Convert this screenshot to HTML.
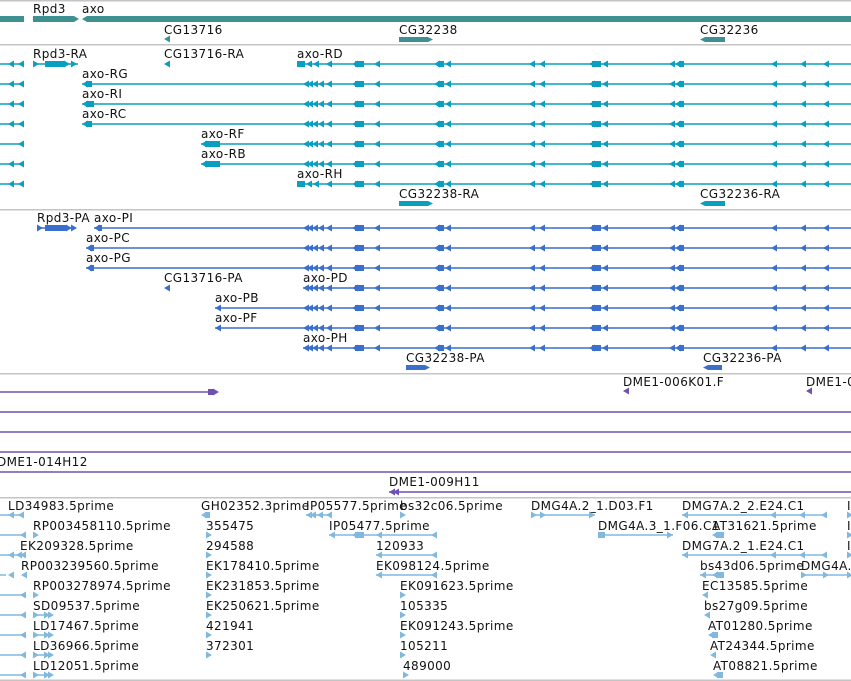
<!DOCTYPE html>
<html><head><meta charset="utf-8"><style>
html,body{margin:0;padding:0;background:#fff;overflow:hidden}
svg{display:block}
text{font-family:"DejaVu Sans","Liberation Sans",sans-serif;font-size:12px;letter-spacing:0.4px;fill:#111}
</style></head><body>
<svg id="s" xmlns="http://www.w3.org/2000/svg" width="851" height="681" viewBox="0 0 851 681"></svg>
<script>
const s=document.getElementById('s');let h='';
function ln(x1,x2,y,c){h+=`<rect x="${x1}" y="${y-0.75}" width="${x2-x1}" height="1.5" fill="${c}"/>`;}
function hr(y){h+=`<rect x="0" y="${y}" width="851" height="1.5" fill="#c4c4c4"/>`;}
function L(x,y,c){h+=`<polygon points="${x},${y} ${x+6},${y-3.5} ${x+6},${y+3.5}" fill="${c}"/>`;}
function R(x,y,c){h+=`<polygon points="${x+6},${y} ${x},${y-3.5} ${x},${y+3.5}" fill="${c}"/>`;}
function B(x1,x2,y,c){h+=`<rect x="${x1}" y="${y-3}" width="${x2-x1}" height="6" fill="${c}"/>`;}
function T(x,y,t){h+=`<text x="${x}" y="${y}">${t}</text>`;}
hr(0);
const tc='#3f9090';
T(33,13,'Rpd3');T(82,13,'axo');
h+=`<rect x="0" y="16" width="24" height="6" fill="${tc}"/>`;
h+=`<polygon points="33,16 74,16 79,19 74,22 33,22" fill="${tc}"/>`;
h+=`<polygon points="82,19 87,16 851,16 851,22 87,22" fill="${tc}"/>`;
T(164,34,'CG13716');L(164,39,tc);
T(399,34,'CG32238');h+=`<polygon points="399,37 428,37 433,39.5 428,42 399,42" fill="${tc}"/>`;
T(700,34,'CG32236');h+=`<polygon points="700,39.5 705,37 725,37 725,42 705,42" fill="${tc}"/>`;
hr(44);
function exons(y,c,full){
 if(full){B(297,305,y,c);L(306,y,c);L(313,y,c);}else{L(303,y,c);L(307,y,c);L(312,y,c);L(318,y,c);}
 L(326,y,c);B(355,364,y,c);L(352,y,c);L(374,y,c);
 L(434,y,c);B(438,444,y,c);L(445,y,c);
 L(529,y,c);L(539,y,c);
 L(589,y,c);B(592,601,y,c);L(602,y,c);
 L(669,y,c);L(675,y,c);B(679,684,y,c);
 L(771,y,c);L(800,y,c);L(823,y,c);
}
const rc='#0a9fc0';
const tr=[['axo-RD',297,64,297,0,1],['axo-RG',82,84,82,10,0],['axo-RI',82,104,82,12,0],['axo-RC',82,124,82,10,0],['axo-RF',201,144,201,19,0],['axo-RB',201,164,201,19,0],['axo-RH',297,184,297,0,1]];
tr.forEach((r,i)=>{const[lab,lx,y,st,bl,full]=r;T(lx,y-6,lab);ln(st,851,y,rc);if(bl){L(st,y,rc);B(st+4,st+bl,y,rc);}exons(y,rc,full);
 ln(0,24,y,rc);if(i!=4)L(8,y,rc);L(18,y,rc);});
T(33,58,'Rpd3-RA');R(33,64,rc);ln(33,78,64,rc);B(45,64,64,rc);R(64,64,rc);R(71,64,rc);
T(164,58,'CG13716-RA');L(164,64,rc);
T(399,198,'CG32238-RA');h+=`<polygon points="399,201 428,201 433,203.5 428,206 399,206" fill="${rc}"/>`;
T(700,198,'CG32236-RA');h+=`<polygon points="700,203.5 705,201 725,201 725,206 705,206" fill="${rc}"/>`;
hr(209);
const pc='#3a6fcc';
const pr=[['axo-PI',94,228,94],['axo-PC',86,248,86],['axo-PG',86,268,86],['axo-PD',303,288,303],['axo-PB',215,308,215],['axo-PF',215,328,215],['axo-PH',303,348,303]];
pr.forEach(r=>{const[lab,lx,y,st]=r;T(lx,y-6,lab);ln(st,851,y,pc);L(st,y,pc);if(st<100)B(st+4,st+8,y,pc);exons(y,pc,0);});
T(37,222,'Rpd3-PA');R(37,228,pc);ln(37,76,228,pc);B(45,66,228,pc);R(66,228,pc);R(71,228,pc);
T(164,282,'CG13716-PA');L(164,288,pc);
T(406,362,'CG32238-PA');h+=`<polygon points="406,365 425,365 430,367.5 425,370 406,370" fill="${pc}"/>`;
T(703,362,'CG32236-PA');h+=`<polygon points="703,367.5 708,365 722,365 722,370 708,370" fill="${pc}"/>`;
hr(373);
const vc='#7050b0';
ln(0,215,392,vc);B(208,214,392,vc);R(213,392,vc);
T(623,386,'DME1-006K01.F');L(623,391,vc);
T(806,386,'DME1-0');L(806,391,vc);
[412,432,452,472].forEach(y=>ln(0,851,y,vc));
T(-3,466,'DME1-014H12');
T(389,486,'DME1-009H11');ln(389,851,492,vc);L(389,492,vc);L(393,492,vc);
hr(497);
const ec='#80b8e0';const Y=n=>515+20*n;
T(8,510,'LD34983.5prime');ln(0,24,Y(0),ec);L(8,Y(0),ec);L(18,Y(0),ec);
const leftR=[['RP003458110.5prime',33],['EK209328.5prime',20],['RP003239560.5prime',21],['RP003278974.5prime',33],['SD09537.5prime',33],['LD17467.5prime',33],['LD36966.5prime',33],['LD12051.5prime',33]];
leftR.forEach((r,i)=>{const n=i+1,y=Y(n);T(r[1],y-5,r[0]);
 if(n==3){ln(0,6,y,ec);L(8,y,ec);L(21,y,ec);}
 else{ln(0,24,y,ec);L(20,y,ec);}
 if(n==2){L(8,y,ec);L(16,y,ec);}
 if(n==1||n==4)R(33,y,ec);
 if(n>=5){ln(33,52,y,ec);R(33,y,ec);R(44,y,ec);R(48,y,ec);}
});
T(201,510,'GH02352.3prime');L(201,Y(0),ec);B(205,210,Y(0),ec);
['355475','294588','EK178410.5prime','EK231853.5prime','EK250621.5prime','421941','372301'].forEach((t,i)=>{T(206,Y(i+1)-5,t);R(206,Y(i+1),ec);});
T(306,510,'IP05577.5prime');ln(306,332,Y(0),ec);L(306,Y(0),ec);L(310,Y(0),ec);L(317,Y(0),ec);L(326,Y(0),ec);
T(400,510,'bs32c06.5prime');R(400,Y(0),ec);
T(329,530,'IP05477.5prime');ln(329,437,Y(1),ec);L(329,Y(1),ec);B(355,364,Y(1),ec);L(352,Y(1),ec);L(376,Y(1),ec);L(431,Y(1),ec);
T(376,550,'120933');ln(376,437,Y(2),ec);L(376,Y(2),ec);L(431,Y(2),ec);
T(376,570,'EK098124.5prime');ln(376,437,Y(3),ec);L(376,Y(3),ec);L(431,Y(3),ec);
[['EK091623.5prime',400],['105335',400],['EK091243.5prime',400],['105211',400],['489000',403]].forEach((r,i)=>{T(r[1],Y(i+4)-5,r[0]);R(r[1],Y(i+4),ec);});
T(531,510,'DMG4A.2_1.D03.F1');ln(531,595,Y(0),ec);R(531,Y(0),ec);R(540,Y(0),ec);R(589,Y(0),ec);
T(598,530,'DMG4A.3_1.F06.C1');ln(598,673,Y(1),ec);R(598,Y(1),ec);B(598,605,Y(1),ec);R(667,Y(1),ec);
[[0,'DMG7A.2_2.E24.C1'],[2,'DMG7A.2_1.E24.C1']].forEach(r=>{const y=Y(r[0]);T(682,y-5,r[1]);ln(682,827,y,ec);L(682,y,ec);L(770,y,ec);L(799,y,ec);L(821,y,ec);});
T(712,530,'AT31621.5prime');L(712,Y(1),ec);B(716,724,Y(1),ec);
T(700,570,'bs43d06.5prime');ln(700,724,Y(3),ec);L(700,Y(3),ec);L(712,Y(3),ec);B(716,724,Y(3),ec);
T(801,570,'DMG4A.');ln(801,851,Y(3),ec);R(801,Y(3),ec);R(823,Y(3),ec);
[['EC13585.5prime',702,0],['bs27g09.5prime',704,0],['AT01280.5prime',708,1],['AT24344.5prime',710,0],['AT08821.5prime',713,1]].forEach((r,i)=>{const y=Y(i+4);T(r[1],y-5,r[0]);L(r[1],y,ec);if(r[2])B(r[1]+4,r[1]+10,y,ec);});
[0,1,2].forEach(n=>{T(847,Y(n)-5,'I');R(847,Y(n),ec);});
R(847,Y(3),ec);
hr(679.5);
s.innerHTML=h;
</script>
</body></html>
